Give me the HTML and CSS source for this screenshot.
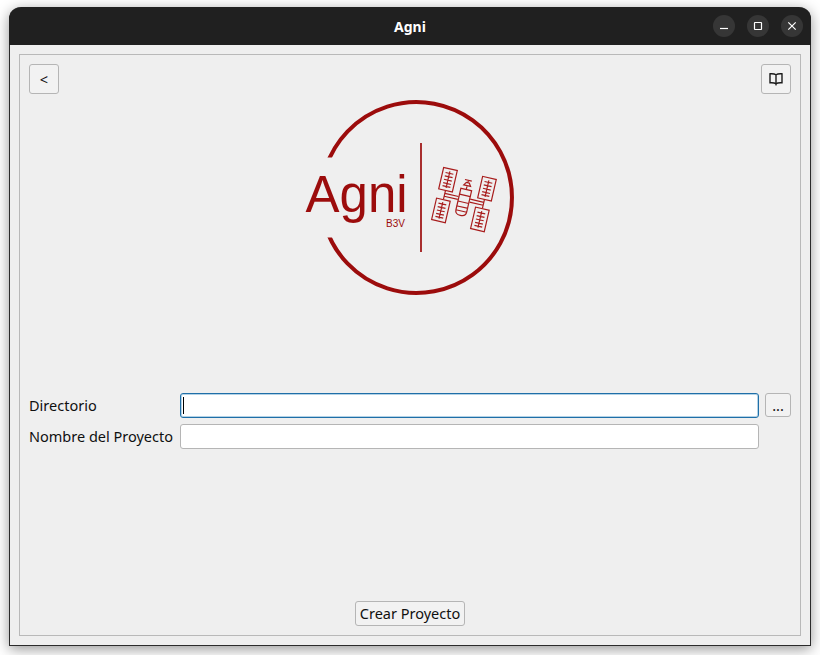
FILE: index.html
```html
<!DOCTYPE html>
<html lang="es">
<head>
<meta charset="utf-8">
<title>Agni</title>
<link rel="stylesheet" href="styles.css">
</head>
<body>
<div class="window">
  <header class="titlebar">
    <div class="title">Agni</div>
    <div class="controls">
      <span class="ctl"><svg width="22" height="22" viewBox="0 0 22 22"><path d="M7 13.500h8" class="ctl-line"/></svg></span>
      <span class="ctl"><svg width="22" height="22" viewBox="0 0 22 22"><rect x="7.500" y="7.500" width="7" height="7" rx="0.500" class="ctl-line"/></svg></span>
      <span class="ctl"><svg width="22" height="22" viewBox="0 0 22 22"><path d="M7.300 7.300l7.400 7.400M14.700 7.300l-7.400 7.400" class="ctl-line"/></svg></span>
    </div>
  </header>
  <main class="content">
    <div class="frame">
      <div class="toolbar">
        <button class="btn btn-square" type="button">&lt;</button>
        <button class="btn btn-square" type="button" aria-label="Manual">
          <svg width="14" height="14" viewBox="0 0 14 14" class="book"><path d="M7 2.800C5.800 1.900 3.600 1.600 1 1.800v9c2.600-.2 4.800.1 6 1 1.200-.9 3.400-1.200 6-1v-9c-2.600-.2-4.800.1-6 1zM7 2.800v9"/><path d="M6.400 12.700h1.200"/></svg>
        </button>
      </div>
      <div class="logo-area">
        <svg class="logo" width="240" height="210" viewBox="290 94 240 210">
          <defs>
            <clipPath id="ring-clip"><rect x="290" y="94" width="240" height="63.500"/><rect x="290" y="237.500" width="240" height="66"/><rect x="416" y="94" width="114" height="210"/></clipPath>
            <g id="panel">
              <rect x="-7" y="-11" width="14" height="22"/>
              <path d="M0 -8.500V8.500M-4 -6.500H4M-4 -3H4M-4 0.500H4M-4 4H4M-4 7H4"/>
            </g>
          </defs>
          <path class="ring" clip-path="url(#ring-clip)" d="M325.800 167.500A95.500 95.500 0 1 1 325.800 227.500"/>
          <text class="logo-main" x="305.500" y="211.500">Agni</text>
          <text class="logo-sub" x="386" y="226.700">B3V</text>
          <path class="divider" d="M421 143V252"/>
          <g class="sat" transform="translate(464 199.300) rotate(13)">
            <use href="#panel" x="-20" y="-15.500"/>
            <use href="#panel" x="-20" y="16"/>
            <use href="#panel" x="20" y="-15.500"/>
            <use href="#panel" x="20" y="16"/>
            <path d="M-20 -4.500V4.500M20 -4.500V4.500M-20 -1.500H-6M-20 1.500H-6M6 -1.500H20M6 1.500H20"/>
            <rect x="-5.500" y="-10" width="11" height="18"/>
            <path d="M-5.500 -4H5.500M-5.500 3H5.500M-5.500 8V12Q-5.500 16.500 0 16.500Q5.500 16.500 5.500 12V8M-5.500 12H5.500"/>
            <path d="M0 -10V-14M-3.500 -14H3.500L1.500 -17H-1.500ZM-3.500 -19.500H3.500M0 -17V-19.500"/>
          </g>
        </svg>
      </div>
      <form class="form">
        <label class="label">Directorio</label>
        <div class="field field-focus"><input class="input" type="text"><span class="caret"></span></div>
        <button class="btn btn-dots" type="button">...</button>
        <label class="label">Nombre del Proyecto</label>
        <div class="field"><input class="input" type="text"></div>
      </form>
      <div class="footer">
        <button class="btn btn-main" type="button">Crear Proyecto</button>
      </div>
    </div>
  </main>
</div>
</body>
</html>
```

FILE: styles.css
```css
* { box-sizing: border-box; }

html, body {
  margin: 0;
  height: 100%;
  background: #ffffff;
  overflow: hidden;
}

body {
  padding: 7px 9px 9px;
  font-family: "Noto Sans", "Open Sans", sans-serif;
  font-size: 14.500px;
  color: #101010;
}

.window {
  height: 639px;
  display: flex;
  flex-direction: column;
  background: #efefef;
  border-radius: 12px 12px 0 0;
  box-shadow: 0 3px 14px rgba(0, 0, 0, 0.42);
  border: 1px solid #2b2b2b;
  border-top: 0;
}

.titlebar {
  position: relative;
  flex: 0 0 38px;
  margin: 0 -1px;
  display: flex;
  align-items: center;
  justify-content: center;
  background: #202020;
  border-radius: 12px 12px 0 0;
}

.title {
  color: #ffffff;
  font-weight: 700;
  font-size: 14px;
}

.controls {
  position: absolute;
  right: 8px;
  top: 8px;
  display: flex;
  gap: 12px;
}

.ctl {
  width: 22px;
  height: 22px;
  border-radius: 50%;
  background: #363636;
  display: block;
}

.ctl svg { display: block; }

.ctl-line {
  fill: none;
  stroke: #ffffff;
  stroke-width: 1.200;
}

.content {
  flex: 1;
  padding: 9px;
  display: flex;
  min-height: 0;
}

.frame {
  flex: 1;
  display: flex;
  flex-direction: column;
  border: 1px solid #b9b9b9;
  padding: 9px;
}

.toolbar {
  display: flex;
  justify-content: space-between;
}

.btn {
  font: inherit;
  color: #101010;
  padding: 0;
  background: #f2f2f2;
  border: 1px solid #b5b5b5;
  border-radius: 3px;
  display: flex;
  align-items: center;
  justify-content: center;
}

.btn-square {
  width: 30px;
  height: 30px;
}

.book {
  fill: none;
  stroke: #1c1c1c;
  stroke-width: 1.400;
}

.logo-area {
  height: 299px;
  display: flex;
  justify-content: center;
  align-items: flex-start;
}

.logo { display: block; }

.ring {
  fill: none;
  stroke: #9c0c0c;
  stroke-width: 4;
}

.divider {
  fill: none;
  stroke: #9c0c0c;
  stroke-width: 1.700;
}

.logo-main {
  fill: #9c0c0c;
  font-family: "Liberation Sans", Arial, sans-serif;
  font-size: 51px;
}

.logo-sub {
  fill: #9c0c0c;
  font-family: "Liberation Sans", Arial, sans-serif;
  font-size: 10px;
}

.sat, .sat rect, .sat path {
  fill: none;
  stroke: #a81c1c;
  stroke-width: 1.200;
}

#panel rect, #panel path {
  fill: none;
  stroke: #a81c1c;
  stroke-width: 1.200;
}

.form {
  display: grid;
  grid-template-columns: 145px 1fr 26px;
  column-gap: 6px;
  row-gap: 6px;
  grid-auto-rows: 25px;
  align-items: center;
}

.label {
  white-space: nowrap;
  padding-bottom: 2px;
}

.field {
  position: relative;
  height: 25px;
  grid-column: 2;
}

.input {
  display: block;
  width: 100%;
  height: 100%;
  background: #ffffff;
  border: 1px solid #b5b5b5;
  border-radius: 3px;
  outline: 0;
  padding: 0 3px;
  font: inherit;
}

.field-focus .input {
  border-color: #1f6fa8;
  box-shadow: 0 0 0 1px #b3d2e6 inset;
}

.caret {
  position: absolute;
  left: 3px;
  top: 4px;
  width: 1px;
  height: 17px;
  background: #000000;
}

.btn-dots {
  height: 24px;
  align-self: start;
}

.footer {
  margin-top: auto;
  display: flex;
  justify-content: center;
}

.btn-main {
  width: 110px;
  height: 25px;
  padding-bottom: 2px;
}
```
